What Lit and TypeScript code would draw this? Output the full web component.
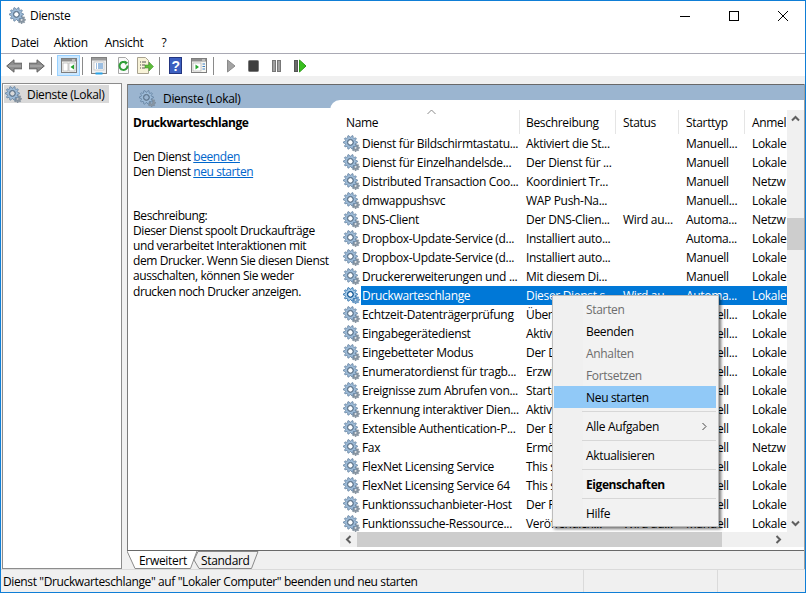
import { LitElement, html, css, svg } from "lit";
import { customElement } from "lit/decorators.js";

function gearPath(cx: number, cy: number, ro: number, ri: number, teeth: number, hole: number) {
  let d = "";
  const n = teeth * 4;
  for (let i = 0; i < n; i++) {
    const a = ((i - 0.5) / n) * Math.PI * 2;
    const r = i % 4 < 2 ? ro : ri;
    d += `${i ? "L" : "M"}${(cx + r * Math.cos(a)).toFixed(2)} ${(cy + r * Math.sin(a)).toFixed(2)}`;
  }
  d += "Z";
  d += `M${cx - hole} ${cy}a${hole} ${hole} 0 1 0 ${hole * 2} 0a${hole} ${hole} 0 1 0 ${-hole * 2} 0Z`;
  return d;
}

const gear = (sel = false) => html`<svg class="gear" viewBox="0 0 17 17" width="17" height="17">
  <path d=${gearPath(12.6, 12.8, 4, 2.9, 8, 1.2)} fill=${sel ? "#7ea6cc" : "#8a97a3"} fill-rule="evenodd" stroke=${sel ? "#1f68a8" : "#6d7d8c"} stroke-width=".5"/>
  <path d=${gearPath(7.4, 7.4, 7, 5.2, 10, 2.6)} fill=${sel ? "#a8cbe8" : "#9dbbd8"} fill-rule="evenodd" stroke=${sel ? "#0f5a9c" : "#5c7a98"} stroke-width=".7"/>
  <circle cx="7.4" cy="7.4" r="3" fill="none" stroke=${sel ? "#0a4f8c" : "#5f7488"} stroke-width="1"/>
</svg>`;

const ti = (w: number, content: unknown) => html`<svg class="ti" viewBox="0 0 ${w} 18" width=${w} height="18">${content}</svg>`;

const winIcon = (inner: unknown) => svg`
  <rect x=".5" y="1.5" width="15" height="14" fill="#f7f7f2" stroke="#7d7d7d"/>
  <rect x="1" y="2" width="14" height="2.5" fill="#8e8e8e"/>
  <rect x="11" y="2.5" width="3" height="1" fill="#eee"/>
  ${inner}`;

const back = svg`<path d="M.7 9 8 2.8v3.4h8v5.6H8v3.4Z" fill="#8d8d8d" stroke="#626262"/><path d="M3 9h12" stroke="#b5b5b5"/>`;
const fwd = svg`<path d="M15.3 9 8 2.8v3.4H0v5.6h8v3.4Z" fill="#8d8d8d" stroke="#626262"/><path d="M1 9h12" stroke="#b5b5b5"/>`;
const panelToggle = winIcon(svg`<rect x="2" y="6" width="5" height="8" fill="#fff" stroke="#a4a4a4" stroke-width=".6"/><rect x="8" y="6" width="6" height="8" fill="#fff" stroke="#a4a4a4" stroke-width=".6"/><path d="M13 7.5v5L9.5 10Z" fill="#27a52f"/>`);
const props = svg`<rect x=".5" y=".5" width="15" height="16" fill="#efefef" stroke="#808080"/><rect x="1" y="1" width="14" height="2.5" fill="#9a9a9a"/><rect x="3" y="5" width="10" height="8" fill="#fff" stroke="#b0b0b0" stroke-width=".6"/><path d="M5 7h1M7 7h5M5 9h1M7 9h5M5 11h1M7 11h5" stroke="#3a7fc4"/><rect x="4.5" y="15.5" width="7" height="2" fill="#29a3e8"/>`;
const refresh = svg`<path d="M2.5.5h7l3 3v13h-10Z" fill="#fafafa" stroke="#a8a8a8"/><path d="M11.5 8.5a4 4 0 1 1-1.6-2.8" fill="none" stroke="#2f9e37" stroke-width="2"/><path d="M8.5 3.5l3.5 2-2.5 2.5Z" fill="#2f9e37"/>`;
const exportI = svg`<path d="M.5.5h8l3 3v13H.5Z" fill="#f8f3d8" stroke="#a8a290"/><path d="M3 5h1M5 5h4M3 8h1M5 8h3M3 11h1M5 11h3" stroke="#555"/><path d="M8 8h4V5l4.5 4.5L12 14v-3H8Z" fill="#5dbb3a" stroke="#3b8f24" stroke-width=".5"/>`;
const help = svg`<rect x=".5" y=".5" width="12" height="16" fill="#3c5fc0" stroke="#23357f"/><text x="6.5" y="14" font-size="14" font-weight="700" font-family="Liberation Sans" fill="#fff" text-anchor="middle">?</text>`;
const actionWin = winIcon(svg`<rect x="2" y="6" width="8" height="8" fill="#fff" stroke="#a4a4a4" stroke-width=".6"/><path d="M4.5 7.5v5L8 10Z" fill="#27a52f"/><path d="M11.5 7h2.5M11.5 9.5h2.5M11.5 12h2.5" stroke="#3a7fc4"/>`);
const play = svg`<path d="M.5 3v12L8 9Z" fill="#a3a3a3" stroke="#8a8a8a"/>`;
const stop = svg`<rect x=".5" y="3.5" width="10" height="11" rx="1" fill="#3e3e3e" stroke="#767676"/>`;
const pause = svg`<rect x=".5" y="3.5" width="3" height="11" fill="#a0a0a0" stroke="#777"/><rect x="5.5" y="3.5" width="3" height="11" fill="#a0a0a0" stroke="#777"/>`;
const restart = svg`<rect x=".5" y="3.5" width="3" height="11" fill="#6a6a6a" stroke="#555"/><path d="M5.5 3v12L12 9Z" fill="#39c11f" stroke="#2c9a18"/>`;

const rows: [string, string, string, string, string][] = [
  ["Dienst für Bildschirmtastatu...", "Aktiviert die St...", "", "Manuell...", "Lokale"],
  ["Dienst für Einzelhandelsde...", "Der Dienst für ...", "", "Manuell", "Lokale"],
  ["Distributed Transaction Coo...", "Koordiniert Tr...", "", "Manuell", "Netzw"],
  ["dmwappushsvc", "WAP Push-Na...", "", "Manuell...", "Lokale"],
  ["DNS-Client", "Der DNS-Clien...", "Wird au...", "Automa...", "Netzw"],
  ["Dropbox-Update-Service (d...", "Installiert auto...", "", "Automa...", "Lokale"],
  ["Dropbox-Update-Service (d...", "Installiert auto...", "", "Manuell", "Lokale"],
  ["Druckererweiterungen und ...", "Mit diesem Di...", "", "Manuell", "Lokale"],
  ["Druckwarteschlange", "Dieser Dienst s...", "Wird au...", "Automa...", "Lokale"],
  ["Echtzeit-Datenträgerprüfung", "Überprüft ...", "", "Manuell...", "Lokale"],
  ["Eingabegerätedienst", "Aktiviert ...", "", "Manuell...", "Lokale"],
  ["Eingebetteter Modus", "Der Dienst ...", "", "Manuell...", "Lokale"],
  ["Enumeratordienst für tragb...", "Erzwingt ...", "", "Manuell...", "Lokale"],
  ["Ereignisse zum Abrufen von...", "Startet ...", "", "Manuell", "Lokale"],
  ["Erkennung interaktiver Dien...", "Aktiviert ...", "", "Manuell", "Lokale"],
  ["Extensible Authentication-P...", "Der Ber...", "", "Manuell", "Lokale"],
  ["Fax", "Ermöglicht ...", "", "Manuell", "Netzw"],
  ["FlexNet Licensing Service", "This service ...", "", "Manuell", "Lokale"],
  ["FlexNet Licensing Service 64", "This service ...", "", "Manuell", "Lokale"],
  ["Funktionssuchanbieter-Host", "Der FDP ...", "", "Manuell", "Lokale"],
  ["Funktionssuche-Ressource...", "Veröffentlich...", "Wird au...", "Manuell", "Lokale"],
];

type MI = { t: string; dis?: boolean; hot?: boolean; bold?: boolean; sub?: boolean } | null;
const menu: MI[] = [
  { t: "Starten", dis: true },
  { t: "Beenden" },
  { t: "Anhalten", dis: true },
  { t: "Fortsetzen", dis: true },
  { t: "Neu starten", hot: true },
  null,
  { t: "Alle Aufgaben", sub: true },
  null,
  { t: "Aktualisieren" },
  null,
  { t: "Eigenschaften", bold: true },
  null,
  { t: "Hilfe" },
];

const chev = (p: string) => html`<svg viewBox="0 0 9 9" width="9" height="9"><path d=${p} fill="none" stroke="#606060" stroke-width="2"/></svg>`;

@customElement("app-root")
export class AppRoot extends LitElement {
  static styles = css`
    :host {
      position: relative; width: 806px; height: 593px; box-sizing: border-box;
      border: 1px solid #0f7ed6; background: #f0f0f0; overflow: hidden;
      font: 12px "Open Sans", "Noto Sans", sans-serif; letter-spacing: -0.32px; color: #000;
      display: flex; flex-direction: column;
    }
    svg { display: block; flex: none; }
    .title { height: 31px; box-sizing: border-box; padding-bottom: 2px; background: #fff; display: flex; align-items: center; padding-left: 8px; gap: 4px; }
    .title .name { flex: 1; }
    .wc { width: 45px; display: grid; place-items: center; }
    .menubar { height: 21px; background: #fff; display: flex; align-items: center; border-bottom: 1px solid #a9a9b4; }
    .m1 { margin-left: 10px; } .m2 { margin-left: 15px; } .m3 { margin-left: 17px; } .m4 { margin-left: 18px; }
    .toolbar { height: 22px; box-sizing: border-box; padding-top: 1px; background: #fff; display: flex; align-items: center; padding-left: 5px; }
    .tsep { width: 1px; height: 18px; background: #8a8a8a; }
    .hot { width: 23px; height: 21px; box-sizing: border-box; background: #cce8ff; border: 1px solid #99d1ff; display: grid; place-items: center; }
    .gap { height: 8px; }
    .main { flex: 1; display: flex; min-height: 0; }
    .tree { width: 120px; margin: -1px 0 0 1px; background: #fff; border: 1px solid #8c8c8c; box-sizing: border-box; padding: 1px; }
    .tree .node { width: 105px; height: 18px; background: #d9d9d9; display: flex; align-items: center; gap: 5px; padding-left: 1px; box-sizing: border-box; }
    .split { width: 5px; }
    .pane { flex: 1; display: flex; flex-direction: column; border-left: 1px solid #7a7a7a; border-right: 1px solid #a0a0a0; min-width: 0; background: #fff; }
    .band { height: 24px; flex: none; background: #9bb5d0; border-top: 1px solid #696969; box-sizing: border-box; display: flex; align-items: center; gap: 7px; padding: 4px 0 0 11px; }
    .body { flex: 1; min-height: 0; display: flex; background: #fff; }
    .details { width: 202px; flex: none; padding: 7px 0 0 5px; box-sizing: border-box; line-height: 15.2px; white-space: nowrap; letter-spacing: -0.42px; }
    .details b { display: block; margin-bottom: 19px; letter-spacing: -0.47px; }
    .details a { color: #0066cc; text-decoration: underline; }
    .desc { margin-top: 28px; }
    .list { flex: 1; min-width: 0; margin-top: -8px; background: #fff; border-top-left-radius: 10px; display: flex; flex-direction: column; }
    .upper { height: 432px; flex: none; display: flex; min-height: 0; }
    .content { flex: 1; min-width: 0; padding: 8px 0 0 10px; overflow: hidden; }
    .cols { display: grid; grid-template-columns: 180px 96px 63px 66px 42px; }
    .head { height: 26px; position: relative; }
    .head > div { padding-left: 6px; display: flex; align-items: center; border-right: 1px solid #e5e5e5; box-sizing: border-box; overflow: hidden; white-space: nowrap; margin: 2px 0 0; }
    .head > div:last-of-type { border-right: 0; }
    .head > div:nth-child(n + 3) { padding-left: 7px; }
    .caret { position: absolute; left: 87px; top: 1px; }
    .row { height: 19px; align-items: center; }
    .row > div { white-space: nowrap; overflow: hidden; padding-left: 6px; line-height: 19px; height: 19px; }
    .row > div:nth-child(n + 3) { padding-left: 7px; }
    .row > .nm { padding-left: 3px; display: flex; align-items: center; gap: 1px; }
    .nm span { padding-left: 1px; height: 19px; }
    .row.sel > div { background: #0078d7; color: #fff; }
    .row.sel > .nm { background: none; color: #000; }
    .row.sel .nm span { background: #0078d7; color: #fff; flex: 1; }
    .vs { width: 17px; flex: none; margin-top: 10px; background: #f0f0f0; display: flex; flex-direction: column; }
    .sb { width: 17px; height: 17px; flex: none; display: grid; place-items: center; }
    .vs i { display: block; flex: none; }
    .vs .sp1 { height: 91px; }
    .vs .th { height: 32px; background: #cdcdcd; }
    .vs .sp2 { flex: 1; height: auto; }
    .hs { height: 15px; flex: none; display: flex; padding-left: 10px; background: #fff; }
    .hs .tr { flex: 1; display: flex; background: #f0f0f0; align-items: stretch; }
    .hs .sb { height: 15px; }
    .hs .th { width: 365px; background: #cdcdcd; }
    .hs .fl { flex: 1; }
    .hs .cor { width: 17px; background: #f0f0f0; }
    .tabs { height: 18px; flex: none; display: flex; background: #f0f0f0; border-top: 1px solid #696969; margin-left: -1px; }
    .tab { display: grid; position: relative; }
    .tab > * { grid-area: 1 / 1; }
    .tab span { line-height: 19px; position: relative; }
    .t1 { width: 71px; } .t1 span { padding-left: 12px; }
    .t2 { width: 68px; margin-left: -7px; } .t2 span { padding-left: 10px; }
    .status { height: 23px; flex: none; display: flex; border-top: 1px solid #dadada; box-sizing: border-box; align-items: center; }
    .status .s1 { width: 583px; padding-left: 2px; box-sizing: border-box; white-space: nowrap; border-right: 1px solid #dadada; height: 100%; line-height: 24px; letter-spacing: -0.38px; }
    .status .s2 { width: 133px; border-right: 1px solid #dadada; height: 100%; }
    .ctx { position: absolute; left: 551px; top: 294px; width: 167px; height: 232px; box-sizing: border-box; padding: 2px 2px 3px 1px;
      background: linear-gradient(90deg, #f0f0f0 30px, #f2f2f2 30px); border: 1px solid #bcbcbc; box-shadow: 2px 2px 3px rgba(0,0,0,.55); }
    .it { height: 22px; display: flex; align-items: center; padding-left: 32px; position: relative; }
    .it.dis { color: #6d6d6d; }
    .it.hot2 { background: #91c9f7; }
    .it.bold { font-weight: 700; letter-spacing: -0.42px; }
    .it svg { position: absolute; right: 9px; top: 7px; }
    .ms { height: 7px; display: flex; align-items: center; padding-left: 28px; }
    .ms::after { content: ""; flex: 1; height: 1px; background: #d7d7d7; }
  `;

  render() {
    return html`
      <div class="title">
        ${gear()}
        <span class="name">Dienste</span>
        <div class="wc"><svg viewBox="0 0 10 10" width="10" height="10"><path d="M0 5.5h10" stroke="#000"/></svg></div>
        <div class="wc"><svg viewBox="0 0 10 10" width="10" height="10"><rect x=".5" y=".5" width="9" height="9" fill="none" stroke="#000"/></svg></div>
        <div class="wc"><svg viewBox="0 0 10 10" width="10" height="10"><path d="M0 0l10 10M10 0L0 10" stroke="#000"/></svg></div>
      </div>
      <div class="menubar">
        <span class="m1">Datei</span><span class="m2">Aktion</span><span class="m3">Ansicht</span><span class="m4">?</span>
      </div>
      <div class="toolbar">
        ${ti(16, back)}<div style="width:7px"></div>${ti(16, fwd)}<div style="width:6px"></div>
        <div class="tsep"></div><div style="width:5px"></div>
        <div class="hot">${ti(16, panelToggle)}</div><div style="width:2px"></div>
        <div class="tsep"></div><div style="width:8px"></div>
        ${ti(16, props)}<div style="width:9px"></div>${ti(15, refresh)}<div style="width:6px"></div>${ti(17, exportI)}<div style="width:5px"></div>
        <div class="tsep"></div><div style="width:9px"></div>
        ${ti(13, help)}<div style="width:9px"></div>${ti(16, actionWin)}<div style="width:6px"></div>
        <div class="tsep"></div><div style="width:13px"></div>
        ${ti(9, play)}<div style="width:12px"></div>${ti(11, stop)}<div style="width:13px"></div>${ti(9, pause)}<div style="width:13px"></div>${ti(13, restart)}
      </div>
      <div class="gap"></div>
      <div class="main">
        <div class="tree"><div class="node">${gear()}<span>Dienste (Lokal)</span></div></div>
        <div class="split"></div>
        <div class="pane">
          <div class="band">${gear()}<span>Dienste (Lokal)</span></div>
          <div class="body">
            <div class="details">
              <b>Druckwarteschlange</b>
              <div>Den Dienst <a>beenden</a></div>
              <div>Den Dienst <a>neu starten</a></div>
              <div class="desc">Beschreibung:<br>Dieser Dienst spoolt Druckaufträge<br>und verarbeitet Interaktionen mit<br>dem Drucker. Wenn Sie diesen Dienst<br>ausschalten, können Sie weder<br>drucken noch Drucker anzeigen.</div>
            </div>
            <div class="list">
              <div class="upper">
                <div class="content">
                  <div class="cols head">
                    <div>Name</div><div>Beschreibung</div><div>Status</div><div>Starttyp</div><div>Anmel</div>
                    <svg class="caret" viewBox="0 0 9 6" width="9" height="6"><path d="M.5 5 4.5 1l4 4" fill="none" stroke="#8a8a8a"/></svg>
                  </div>
                  ${rows.map((r, i) => html`<div class="cols row ${i === 8 ? "sel" : ""}">
                    <div class="nm">${gear(i === 8)}<span>${r[0]}</span></div>
                    <div>${r[1]}</div><div>${r[2]}</div><div>${r[3]}</div><div>${r[4]}</div>
                  </div>`)}
                </div>
                <div class="vs">
                  <div class="sb">${chev("M1 6.5 4.5 3 8 6.5")}</div>
                  <i class="sp1"></i><i class="th"></i><i class="sp2"></i>
                  <div class="sb">${chev("M1 2.5 4.5 6 8 2.5")}</div>
                </div>
              </div>
              <div class="hs">
                <div class="tr">
                  <div class="sb">${chev("M6.5 1 3 4.5 6.5 8")}</div>
                  <div class="th"></div><div class="fl"></div>
                  <div class="sb">${chev("M2.5 1 6 4.5 2.5 8")}</div>
                </div>
                <div class="cor"></div>
              </div>
            </div>
          </div>
          <div class="tabs">
            <div class="tab t1">
              <svg viewBox="0 0 71 18" width="71" height="18"><path d="M0 0h71l-7 17.5H8Z" fill="#fff"/><path d="M0 0 8 17.5H63.5L70 0" fill="none" stroke="#8a8a8a"/></svg>
              <span>Erweitert</span>
            </div>
            <div class="tab t2">
              <svg viewBox="0 0 68 18" width="68" height="18"><path d="M7 .5H67L60.5 17.5H8L3 9Z" fill="#f0f0f0" stroke="#8a8a8a"/></svg>
              <span>Standard</span>
            </div>
          </div>
        </div>
      </div>
      <div class="status">
        <div class="s1">Dienst "Druckwarteschlange" auf "Lokaler Computer" beenden und neu starten</div>
        <div class="s2"></div>
      </div>
      <div class="ctx">
        ${menu.map((m) => m === null ? html`<div class="ms"></div>` : html`<div class="it ${m.dis ? "dis" : ""} ${m.hot ? "hot2" : ""} ${m.bold ? "bold" : ""}">${m.t}${m.sub ? html`<svg viewBox="0 0 5 9" width="5" height="9"><path d="M.5 1 4 4.5.5 8" fill="none" stroke="#444"/></svg>` : ""}</div>`)}
      </div>
    `;
  }
}
